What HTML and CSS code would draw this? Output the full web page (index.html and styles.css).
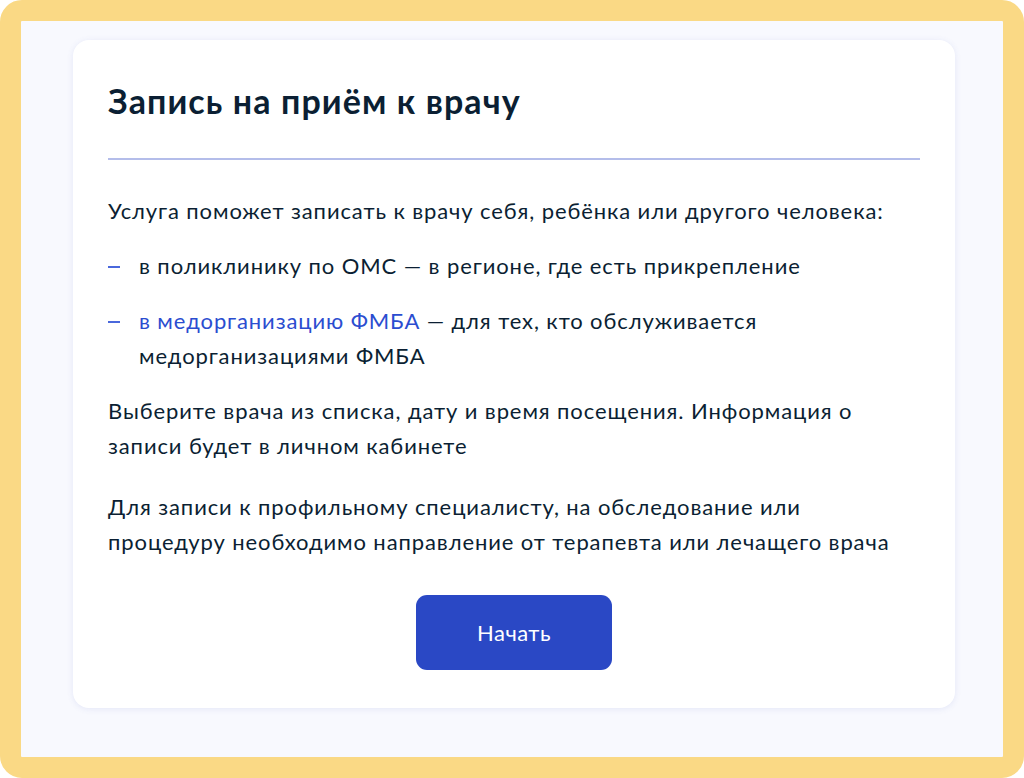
FILE: index.html
```html
<!DOCTYPE html>
<html lang="ru">
<head>
    <meta charset="UTF-8">
    <meta name="viewport" content="width=device-width, initial-scale=1.0">
    <title>Запись на приём к врачу</title>
    <link rel="stylesheet" href="styles.css">
</head>
<body>
    <div class="frame">
        <div class="card">
            <h1 class="title">Запись на приём к врачу</h1>
            <div class="divider"></div>
            <p>Услуга поможет записать к врачу себя, ребёнка или другого человека:</p>
            <ul class="dash-list">
                <li>в поликлинику по ОМС — в регионе, где есть прикрепление</li>
                <li><a href="#">в медорганизацию ФМБА</a> — для тех, кто обслуживается медорганизациями ФМБА</li>
            </ul>
            <p class="gap-lg">Выберите врача из списка, дату и время посещения. Информация о записи будет в личном кабинете</p>
            <p>Для записи к профильному специалисту, на обследование или процедуру необходимо направление от терапевта или лечащего врача</p>
            <div class="actions">
                <button class="btn">Начать</button>
            </div>
        </div>
    </div>
</body>
</html>
```

FILE: styles.css
```css
html, body {
    margin: 0;
    padding: 0;
}

body {
    font-family: Lato, "Noto Sans", sans-serif;
    color: #0b1f33;
    background: #ffffff;
}

.frame {
    width: 1024px;
    height: 778px;
    box-sizing: border-box;
    border: 21px solid #fad985;
    border-radius: 22px;
    background-color: #f8f9fe;
    padding: 19px 48px 0 52px;
}

.card {
    background-color: #ffffff;
    border-radius: 16px;
    box-shadow: 0 1px 6px rgba(86, 100, 200, 0.12);
    padding: 40px 35px 36px 35px;
    height: 668px;
    box-sizing: border-box;
}

.title {
    margin: 0;
    font-size: 34px;
    line-height: 42px;
    font-weight: 700;
    letter-spacing: 1.1px;
}

.divider {
    height: 2px;
    background-color: #b4bdea;
    margin: 36px 0 33px 0;
}

p {
    margin: 0 0 20px 0;
    max-width: 795px;
    font-size: 22px;
    line-height: 35px;
    letter-spacing: 0.9px;
}

p.gap-lg {
    margin-bottom: 26px;
}

.dash-list {
    list-style: none;
    margin: 0 0 20px 0;
    padding: 0;
    max-width: 795px;
}

.dash-list li {
    position: relative;
    padding-left: 31px;
    margin-bottom: 20px;
    font-size: 22px;
    line-height: 35px;
    letter-spacing: 0.9px;
}

.dash-list li:last-child {
    margin-bottom: 0;
}

.dash-list li::before {
    content: "";
    position: absolute;
    left: 0;
    top: 18px;
    width: 12px;
    height: 2px;
    background-color: #4a68dc;
}

.dash-list a {
    color: #2b4dd0;
    text-decoration: none;
}

.actions {
    display: flex;
    justify-content: center;
    margin-top: 36px;
}

.btn {
    width: 196px;
    height: 75px;
    border: none;
    border-radius: 11px;
    background-color: #2a48c5;
    color: #ffffff;
    font-family: Lato, "Noto Sans", sans-serif;
    font-size: 22px;
    letter-spacing: 0.5px;
    cursor: pointer;
}
```
